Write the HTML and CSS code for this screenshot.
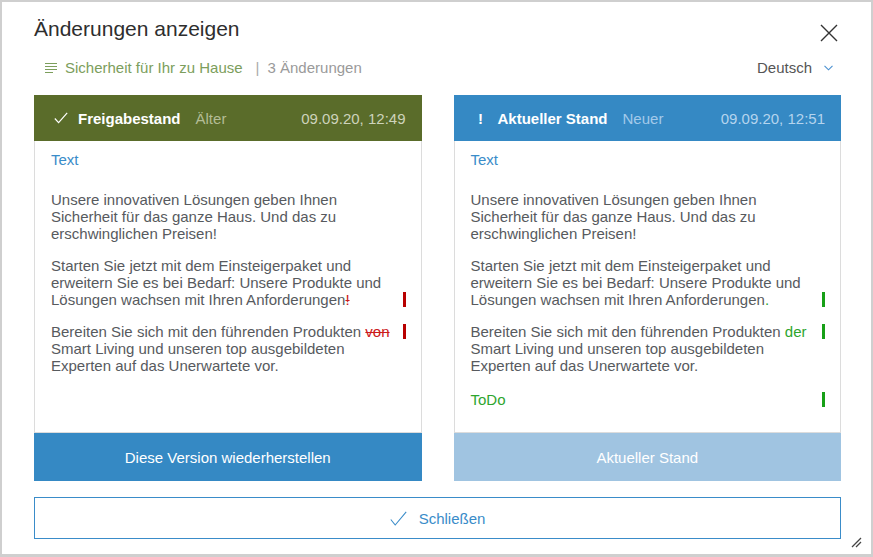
FILE: index.html
```html
<!DOCTYPE html>
<html lang="de">
<head>
    <meta charset="UTF-8">
    <title>Änderungen anzeigen</title>
    <link rel="stylesheet" href="styles.css">
</head>
<body>

<div class="dialog">
    <div class="dialog-head">
        <h1>Änderungen anzeigen</h1>
        <button class="close-x" aria-label="Schließen">
            <svg width="18" height="18" viewBox="0 0 18 18"><path d="M1 1L17 17M17 1L1 17" stroke="#333" stroke-width="1.4" fill="none"/></svg>
        </button>
    </div>

    <div class="subline">
        <div class="page-info">
            <svg class="lines-icon" width="12" height="11" viewBox="0 0 12 11">
                <path d="M0 1.5H12M0 4.5H12M0 7.5H12M0 10.5H8" stroke="#7c9e5c" stroke-width="1" fill="none"/>
            </svg>
            <span class="page-name">Sicherheit für Ihr zu Hause</span>
            <span class="sep">|</span>
            <span class="count">3 Änderungen</span>
        </div>
        <div class="lang">
            Deutsch
            <svg width="9" height="6" viewBox="0 0 9 6"><path d="M0.5 0.8L4.5 4.8L8.5 0.8" stroke="#4a90d0" stroke-width="1.1" fill="none"/></svg>
        </div>
    </div>

    <div class="columns">
        <div class="version">
            <div class="version-head old">
                <span class="head-icon">
                    <svg width="14" height="12" viewBox="0 0 14 12"><path d="M0.8 6.5L4.6 10.6L13.2 0.8" stroke="#fff" stroke-width="1.2" fill="none"/></svg>
                </span>
                <span class="head-title">Freigabestand</span>
                <span class="head-tag">Älter</span>
                <span class="head-date">09.09.20, 12:49</span>
            </div>
            <div class="version-body">
                <div class="field-label">Text</div>
                <p>Unsere innovativen Lösungen geben Ihnen Sicherheit für das ganze Haus. Und das zu erschwinglichen Preisen!</p>
                <p><span class="mark removed line-3"></span>Starten Sie jetzt mit dem Einsteigerpaket und erweitern Sie es bei Bedarf: Unsere Produkte und Lösungen wachsen mit Ihren Anforderungen<del>!</del></p>
                <p><span class="mark removed line-1"></span>Bereiten Sie sich mit den führenden Produkten <del>von</del> Smart Living und unseren top ausgebildeten Experten auf das Unerwartete vor.</p>
            </div>
            <button class="version-action">Diese Version wiederherstellen</button>
        </div>

        <div class="version">
            <div class="version-head current">
                <span class="head-icon">!</span>
                <span class="head-title">Aktueller Stand</span>
                <span class="head-tag">Neuer</span>
                <span class="head-date">09.09.20, 12:51</span>
            </div>
            <div class="version-body">
                <div class="field-label">Text</div>
                <p>Unsere innovativen Lösungen geben Ihnen Sicherheit für das ganze Haus. Und das zu erschwinglichen Preisen!</p>
                <p><span class="mark added line-3"></span>Starten Sie jetzt mit dem Einsteigerpaket und erweitern Sie es bei Bedarf: Unsere Produkte und Lösungen wachsen mit Ihren Anforderungen<ins>.</ins></p>
                <p><span class="mark added line-1"></span>Bereiten Sie sich mit den führenden Produkten <ins>der</ins> Smart Living und unseren top ausgebildeten Experten auf das Unerwartete vor.</p>
                <p class="todo"><span class="mark added line-1"></span><ins>ToDo</ins></p>
            </div>
            <button class="version-action" disabled>Aktueller Stand</button>
        </div>
    </div>

    <button class="close-btn">
        <svg width="17" height="15" viewBox="0 0 17 15"><path d="M0.8 8.5L5.2 14L16.2 0.8" stroke="#3a8cc9" stroke-width="1.1" fill="none"/></svg>
        Schließen
    </button>

    <svg class="resize" width="11" height="11" viewBox="0 0 11 11"><path d="M1 10L10 1M5 10L10 5" stroke="#444" stroke-width="1.3" fill="none"/></svg>
</div>

</body>
</html>
```

FILE: styles.css
```css
body {
    margin: 0;
    font-family: "Liberation Sans", Arial, sans-serif;
    background-color: #fff;
}
.dialog {
    position: relative;
    box-sizing: border-box;
    width: 873px;
    height: 557px;
    border: 2px solid #cfcfcf;
    border-bottom-width: 3px;
    padding: 0 30px 0 32px;
    background-color: #fff;
}
.dialog-head {
    display: flex;
    justify-content: space-between;
    align-items: center;
    padding-top: 14px;
}
.dialog-head h1 {
    margin: 0;
    font-size: 21px;
    font-weight: normal;
    line-height: 24px;
    color: #2e2e2e;
}
.close-x {
    border: none;
    background: none;
    padding: 0;
    margin-right: 3px;
    margin-top: 8px;
    height: 18px;
    cursor: pointer;
}
.subline {
    display: flex;
    justify-content: space-between;
    align-items: center;
    margin-top: 17px;
    font-size: 15px;
    line-height: 17px;
}
.page-info {
    display: flex;
    align-items: center;
    padding-left: 11px;
}
.lines-icon {
    margin-right: 8px;
}
.page-name {
    color: #7c9e5c;
}
.sep {
    color: #aaa;
    margin: 0 8px 0 13px;
}
.count {
    color: #9a9a9a;
}
.lang {
    display: flex;
    align-items: center;
    gap: 12px;
    color: #555;
    padding-right: 8px;
}
.columns {
    display: grid;
    grid-template-columns: 1fr 1fr;
    column-gap: 32px;
    margin-top: 19px;
}
.version {
    display: flex;
    flex-direction: column;
}
.version-head {
    display: flex;
    align-items: center;
    height: 46px;
    padding: 0 16px 0 20px;
    font-size: 15px;
    color: #fff;
}
.version-head.old {
    background-color: #5a6c2a;
}
.version-head.current {
    background-color: #3589c4;
}
.head-icon {
    display: flex;
    justify-content: center;
    width: 14px;
    margin-right: 10px;
    font-weight: bold;
}
.head-title {
    font-weight: bold;
}
.head-tag {
    margin-left: 15px;
}
.old .head-tag {
    color: #b3bc95;
}
.current .head-tag {
    color: #a3caea;
}
.head-date {
    margin-left: auto;
}
.old .head-date {
    color: #cdd3bb;
}
.current .head-date {
    color: #b4d4ee;
}
.version-body {
    box-sizing: border-box;
    height: 292px;
    border: 1px solid #dcdcdc;
    border-top: none;
    padding: 10px 20px 0 16px;
    font-size: 15px;
    line-height: 17px;
    color: #575a5e;
}
.field-label {
    color: #3a8cc9;
    margin-bottom: 23px;
}
.version-body p {
    position: relative;
    margin: 0 0 15px 0;
}
.version-body p.todo {
    margin-top: 17px;
}
.version-body del {
    color: #cc1a1a;
}
.version-body ins {
    color: #2ea52e;
    text-decoration: none;
}
.mark {
    position: absolute;
    right: -5px;
    width: 3px;
    height: 15px;
}
.mark.removed {
    background-color: #b80000;
}
.mark.added {
    background-color: #17a017;
}
.mark.line-1 {
    top: 1px;
}
.mark.line-3 {
    top: 35px;
}
.version-action {
    height: 48px;
    border: none;
    background-color: #3589c4;
    color: #fff;
    font-family: inherit;
    font-size: 15px;
    cursor: pointer;
}
.version-action:disabled {
    background-color: #a0c4e1;
    cursor: default;
}
.close-btn {
    display: flex;
    justify-content: center;
    align-items: center;
    gap: 12px;
    width: 100%;
    height: 42px;
    margin-top: 16px;
    border: 1px solid #3a8cc9;
    background-color: #fff;
    color: #3a8cc9;
    font-family: inherit;
    font-size: 15px;
    cursor: pointer;
}
.resize {
    position: absolute;
    right: 9px;
    bottom: 6px;
}
```
